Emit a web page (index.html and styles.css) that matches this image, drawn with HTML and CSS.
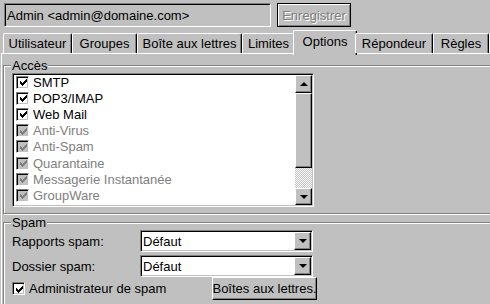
FILE: index.html
```html
<!DOCTYPE html>
<html lang="fr">
<head>
  <meta charset="UTF-8" />
  <title>Compte</title>
  <link rel="stylesheet" href="styles.css">
</head>
<body>
  <div class="top">
    <div class="edit">Admin &lt;admin@domaine.com&gt;</div>
    <div class="btn btn-default disabled">Enregistrer</div>
  </div>

  <div class="tabs">
    <div class="tab w-user">Utilisateur</div>
    <div class="tab w-groups">Groupes</div>
    <div class="tab w-box">Boîte aux lettres</div>
    <div class="tab w-limits">Limites</div>
    <div class="tab w-options selected">Options</div>
    <div class="tab w-resp">Répondeur</div>
    <div class="tab w-rules">Règles</div>
    <div class="tab w-more"></div>
  </div>

  <div class="panel">
    <div class="group group-access">
      <div class="group-title">Accès</div>
      <div class="listbox">
        <div class="items">
          <div class="item"><span class="check"><svg width="7" height="7" viewBox="0 0 7 7"><path d="M0 2v3h1v1h1v1h1v-1h1v-1h1v-1h1v-1h1v-3h-1v1h-1v1h-1v1h-1v1h-1v-1h-1v-1h-1z"/></svg></span>SMTP</div>
          <div class="item"><span class="check"><svg width="7" height="7" viewBox="0 0 7 7"><path d="M0 2v3h1v1h1v1h1v-1h1v-1h1v-1h1v-1h1v-3h-1v1h-1v1h-1v1h-1v1h-1v-1h-1v-1h-1z"/></svg></span>POP3/IMAP</div>
          <div class="item"><span class="check"><svg width="7" height="7" viewBox="0 0 7 7"><path d="M0 2v3h1v1h1v1h1v-1h1v-1h1v-1h1v-1h1v-3h-1v1h-1v1h-1v1h-1v1h-1v-1h-1v-1h-1z"/></svg></span>Web Mail</div>
          <div class="item off"><span class="check"><svg width="7" height="7" viewBox="0 0 7 7"><path d="M0 2v3h1v1h1v1h1v-1h1v-1h1v-1h1v-1h1v-3h-1v1h-1v1h-1v1h-1v1h-1v-1h-1v-1h-1z"/></svg></span>Anti-Virus</div>
          <div class="item off"><span class="check"><svg width="7" height="7" viewBox="0 0 7 7"><path d="M0 2v3h1v1h1v1h1v-1h1v-1h1v-1h1v-1h1v-3h-1v1h-1v1h-1v1h-1v1h-1v-1h-1v-1h-1z"/></svg></span>Anti-Spam</div>
          <div class="item off"><span class="check"><svg width="7" height="7" viewBox="0 0 7 7"><path d="M0 2v3h1v1h1v1h1v-1h1v-1h1v-1h1v-1h1v-3h-1v1h-1v1h-1v1h-1v1h-1v-1h-1v-1h-1z"/></svg></span>Quarantaine</div>
          <div class="item off"><span class="check"><svg width="7" height="7" viewBox="0 0 7 7"><path d="M0 2v3h1v1h1v1h1v-1h1v-1h1v-1h1v-1h1v-3h-1v1h-1v1h-1v1h-1v1h-1v-1h-1v-1h-1z"/></svg></span>Messagerie Instantanée</div>
          <div class="item off"><span class="check"><svg width="7" height="7" viewBox="0 0 7 7"><path d="M0 2v3h1v1h1v1h1v-1h1v-1h1v-1h1v-1h1v-3h-1v1h-1v1h-1v1h-1v1h-1v-1h-1v-1h-1z"/></svg></span>GroupWare</div>
          <div class="item off"><span class="check"><svg width="7" height="7" viewBox="0 0 7 7"><path d="M0 2v3h1v1h1v1h1v-1h1v-1h1v-1h1v-1h1v-3h-1v1h-1v1h-1v1h-1v1h-1v-1h-1v-1h-1z"/></svg></span>Synchronisation</div>
        </div>
        <div class="scrollbar">
          <div class="sb-btn sb-up"><span class="arrow-up"></span></div>
          <div class="sb-thumb"></div>
          <div class="sb-track"></div>
          <div class="sb-btn sb-down"><span class="arrow-down"></span></div>
        </div>
      </div>
    </div>

    <div class="group group-spam">
      <div class="group-title">Spam</div>
      <div class="row">
        <div class="row-label">Rapports spam:</div>
        <div class="combo"><span class="combo-text">Défaut</span><span class="combo-btn"><span class="arrow-down"></span></span></div>
      </div>
      <div class="row row-second">
        <div class="row-label">Dossier spam:</div>
        <div class="combo"><span class="combo-text">Défaut</span><span class="combo-btn"><span class="arrow-down"></span></span></div>
      </div>
      <div class="row row-last">
        <div class="check-label"><span class="check"><svg width="7" height="7" viewBox="0 0 7 7"><path d="M0 2v3h1v1h1v1h1v-1h1v-1h1v-1h1v-1h1v-3h-1v1h-1v1h-1v1h-1v1h-1v-1h-1v-1h-1z"/></svg></span>Administrateur de spam</div>
        <div class="btn btn-boxes"><span>Boîtes aux lettres.</span></div>
      </div>
    </div>
  </div>
</body>
</html>
```

FILE: styles.css
```css
body { margin: 0; width: 490px; height: 304px; overflow: hidden; background: #c0c0c0; font-family: "Liberation Sans", Arial, sans-serif; font-size: 13px; color: #000; }

/* top line */
.top { display: flex; gap: 6px; padding: 3px 0 0 4px; height: 24px; }
.edit { box-sizing: border-box; width: 267px; height: 24px; padding-left: 2px; display: flex; align-items: center; border: 1px solid; border-color: #808080 #fff #fff #808080; box-shadow: inset 1px 1px 0 #000, inset -1px -1px 0 #c0c0c0; white-space: nowrap; }
.btn { box-sizing: border-box; display: flex; align-items: center; justify-content: center; white-space: nowrap; overflow: hidden; border: 1px solid; border-color: #fff #000 #000 #fff; box-shadow: inset -1px -1px 0 #808080; }
.btn-default { width: 74px; height: 24px; border: 1px solid #000; box-shadow: inset 1px 1px 0 #fff, inset -1px -1px 0 #808080, inset -2px -2px 0 #c0c0c0; }
.disabled { color: #808080; text-shadow: 1px 1px 0 #fff; }

/* tabs */
.tabs { position: relative; z-index: 1; display: flex; align-items: flex-end; height: 23px; margin-top: 3px; padding-left: 3px; }
.tab { box-sizing: border-box; flex: none; height: 20px; display: flex; align-items: center; justify-content: center; white-space: nowrap; overflow: hidden; background: #c0c0c0; border: 1px solid; border-bottom: 0; border-color: #fff #000 #c0c0c0 #fff; border-radius: 2px 2px 0 0; box-shadow: inset -1px 0 0 #808080; }
.tab.selected { height: 25px; margin: 0 -2px -2px -2px; padding-bottom: 4px; }
.w-user { width: 69px; }
.w-groups { width: 65px; }
.w-box { width: 105px; }
.w-limits { width: 53px; }
.w-options { width: 64px; }
.w-resp { width: 78px; }
.w-rules { width: 56px; }
.w-more { width: 60px; }

/* panel */
.panel { margin-left: 1px; border-top: 1px solid #fff; border-left: 1px solid #fff; height: 260px; }
.group { width: 520px; margin-left: 1px; border: 1px solid #808080; box-shadow: inset 1px 1px 0 #fff, 1px 1px 0 #fff; }
.group-access { margin-top: 11px; padding: 0 0 6px 8px; }
.group-spam { margin-top: 8px; padding: 0 0 20px 8px; }
.group-title { width: max-content; margin: -8px 0 0 -1px; padding: 0 1px; line-height: 15px; background: #c0c0c0; }

/* list */
.listbox { box-sizing: border-box; display: flex; width: 302px; height: 134px; background: #fff; border: 1px solid; border-color: #808080 #fff #fff #808080; box-shadow: inset 1px 1px 0 #000, inset -1px -1px 0 #c0c0c0; padding: 1px; }
.items { flex: 1; overflow: hidden; }
.item { display: flex; align-items: center; height: 16.2px; padding-left: 2px; white-space: nowrap; }
.item:first-child { margin-top: -1px; }
.item.off { color: #808080; }
.check { box-sizing: border-box; flex: none; width: 13px; height: 13px; margin-right: 4px; display: flex; align-items: center; justify-content: center; background: #fff; border: 1px solid; border-color: #808080 #fff #fff #808080; box-shadow: inset 1px 1px 0 #000, inset -1px -1px 0 #c0c0c0; }
.check svg { fill: #000; shape-rendering: crispEdges; margin: 1px 0 0 1px; }
.item.off .check { background: #c0c0c0; }
.item.off .check svg { fill: #808080; }

.scrollbar { width: 17px; display: flex; flex-direction: column; }
.sb-btn, .sb-thumb { box-sizing: border-box; background: #c0c0c0; border: 1px solid; border-color: #fff #000 #000 #fff; box-shadow: inset -1px -1px 0 #808080; display: flex; align-items: center; justify-content: center; }
.sb-up { height: 18px; }
.sb-thumb { height: 75px; }
.sb-track { height: 20px; background: repeating-conic-gradient(#fff 0 25%, #c0c0c0 0 50%) 0 0 / 2px 2px; }
.sb-down { height: 17px; }
.arrow-up { width: 0; height: 0; border: 4px solid transparent; border-top: 0; border-bottom: 4px solid #000; }
.arrow-down { width: 0; height: 0; border: 4px solid transparent; border-bottom: 0; border-top: 4px solid #000; }

/* spam */
.row { display: flex; align-items: center; height: 22px; }
.row-second { margin-top: 3px; }
.row-last { height: 23px; }
.row-label { width: 128px; }
.combo { box-sizing: border-box; width: 173px; height: 22px; display: flex; background: #fff; border: 1px solid; border-color: #808080 #fff #fff #808080; box-shadow: inset 1px 1px 0 #000, inset -1px -1px 0 #c0c0c0; padding: 1px; }
.combo-text { flex: 1; display: flex; align-items: center; padding-left: 1px; }
.combo-btn { box-sizing: border-box; width: 17px; background: #c0c0c0; border: 1px solid; border-color: #fff #000 #000 #fff; box-shadow: inset -1px -1px 0 #808080; display: flex; align-items: center; justify-content: center; }
.check-label { width: 200px; display: flex; align-items: center; white-space: nowrap; }
.btn-boxes { width: 105px; height: 23px; }
```
